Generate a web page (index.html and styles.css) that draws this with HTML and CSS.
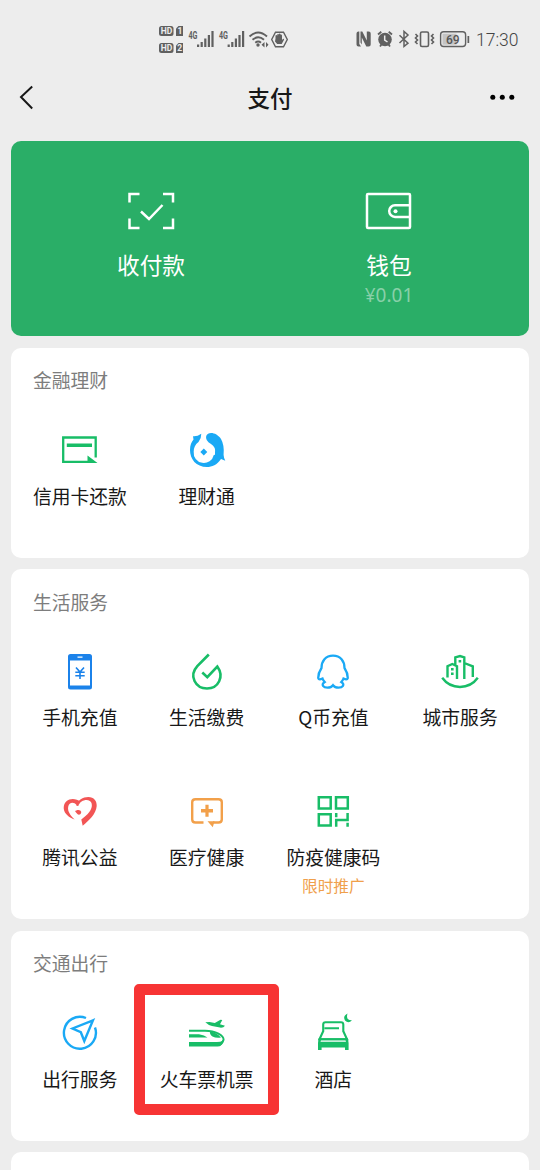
FILE: index.html
```html
<!DOCTYPE html>
<html lang="zh-CN">
<head>
<meta charset="utf-8">
<title>支付</title>
<link rel="stylesheet" href="styles.css">
</head>
<body>
<div class="status">
  <svg class="status-left" width="132" height="32" viewBox="158 24 132 32">
    <g class="solid">
      <rect x="159" y="26" width="14.5" height="10" rx="2.5"/><path d="M178.500 26H183V36H176V28.500Z"/>
      <rect x="159" y="43" width="14.500" height="10" rx="2.500"/><path d="M178.500 43H183V53H176V45.500Z"/>
      <rect x="197" y="44.500" width="2.200" height="2.500"/><rect x="200.600" y="42" width="2.200" height="5"/><rect x="204.200" y="38.500" width="2.200" height="8.500"/><rect x="207.800" y="35" width="2.200" height="12"/><rect x="211.400" y="31" width="2.200" height="16"/>
      <rect x="227.600" y="44.500" width="2.200" height="2.500"/><rect x="231.200" y="42" width="2.200" height="5"/><rect x="234.800" y="38.500" width="2.200" height="8.500"/><rect x="238.400" y="35" width="2.200" height="12"/><rect x="242" y="31" width="2.200" height="16"/>
      <circle cx="258" cy="45" r="1.700"/><path d="M264.500 42V47.500L261.500 44.800ZM266 42V47.500L268.500 44.800Z"/>
      <path d="M275.500 38.500V35.500Q276.700 34.500 277.200 36V34.500Q278.300 33.500 278.800 34.700V34Q280 33 280.500 34.500Q281.700 34 282 35.500V40L283.200 38.800Q284.500 38.800 283.900 40L281.700 44H277.200L275 41.500Z"/>
    </g>
    <g class="line"><path d="M249.500 36.500Q258 28.500 267 36.500M252.500 39.800Q258.200 34.800 264 39.800M255.300 42.700Q258.200 40.300 261 42.700" stroke-width="1.900"/><path d="M275.500 32.200H283.500L287.300 39.500L283.500 46.800H275.500L271.700 39.500Z" stroke-width="1.400"/></g>
    <g class="badge-text"><text x="160.700" y="34.100">HD</text><text x="177.400" y="34.200">1</text><text x="160.700" y="51.100">HD</text><text x="177.200" y="51.200">2</text></g>
    <g class="network-text"><text x="188.500" y="39" textLength="9" lengthAdjust="spacingAndGlyphs">4G</text><text x="219" y="39" textLength="9" lengthAdjust="spacingAndGlyphs">4G</text></g>
  </svg>
  <svg class="status-right" width="116" height="24" viewBox="354 27 116 24">
    <path class="solid" d="M358.500 31.500H359.300V44L361 46.500H358.500Q356.500 46.500 356.500 44.500V33.500Q356.500 31.500 358.500 31.500ZM360.500 31.500H362.300L366.800 40.500V31.500H368.700Q370.700 31.500 370.700 33.500V44.500Q370.700 46.500 368.700 46.500H366.300L361.800 37.500V44.500L360.500 42.500Z"/>
    <circle class="solid" cx="385" cy="39.500" r="6.800"/>
    <g class="line"><path d="M378 34.500L381.300 31.700M388.700 31.700L392 34.500M380 46.500L381.500 44.500M388.500 44.500L390 46.500" stroke-width="1.800"/><path class="light-line" d="M384.700 35.500V40L387.500 42"/><path d="M399.500 35.200L408 43.200L404 46.500V31.500L408 35L399.500 43" stroke-width="1.500"/><rect x="420.500" y="32" width="8" height="14.500" rx="1.500" stroke-width="1.600"/><path d="M415.500 34L417.500 36L415.500 38L417.500 40L415.500 42L417.500 44M433.500 34L431.500 36L433.500 38L431.500 40L433.500 42L431.500 44" stroke-width="1.600"/><rect x="440.600" y="31.800" width="25" height="14.700" rx="3" stroke-width="1.400"/></g>
    <rect class="charge" x="442.500" y="33.700" width="14" height="11"/><rect class="solid" x="467.500" y="36" width="1.700" height="7"/>
    <text class="battery-text" x="446" y="43.600">69</text>
  </svg>
  <span class="clock">17:30</span>
</div>

<header class="nav">
  <svg width="28" height="32" viewBox="0 0 28 32"><path class="nav-line" d="M20.200 5.500L9 16L20.200 27.500"/></svg>
  <h1>支付</h1>
  <svg width="28" height="32" viewBox="0 0 28 32"><circle cx="2.800" cy="16.300" r="2.500"/><circle cx="12.300" cy="16.300" r="2.500"/><circle cx="21.800" cy="16.300" r="2.500"/></svg>
</header>

<main class="cards">
  <section class="wallet">
    <div class="wallet-item">
      <svg width="48" height="40" viewBox="0 0 48 40"><path d="M2.500 12.500V4H12.500M36 4H46V12.500M46 28.500V38H36M12.500 38H2.500V28.500M14 21.500L22 29L35.500 15"/></svg>
      <span class="wallet-label">收付款</span>
    </div>
    <div class="wallet-item">
      <svg width="48" height="40" viewBox="0 0 48 40"><rect x="2" y="4" width="43" height="34" rx="1"/><path d="M44.500 15.300H30A5.800 5.800 0 0 0 30 26.900H44.500"/><circle class="wallet-dot" cx="30.500" cy="21.200" r="2"/></svg>
      <span class="wallet-label">钱包</span>
      <span class="balance">¥0.01</span>
    </div>
  </section>

  <section class="card">
    <h2>金融理财</h2>
    <div class="grid">
      <div class="item"><svg class="icon green" viewBox="0 0 48 48"><path d="M39.700 31.500V11.500H7.200V35.800H33"/><path class="fill" d="M10.800 17.500H36V21H10.800ZM31.500 29.500L41.500 37H31.500Z"/></svg><span>信用卡还款</span></div>
      <div class="item"><svg class="icon sky" viewBox="0 0 48 48"><path class="fill" d="M10 10.300Q14 10.800 18.300 7.800Q18.500 12 15.500 16C12 18.500 10.700 22 10.700 25.700A10.200 10.200 0 0 0 30.800 29Q32.500 29.500 32 27Q33 21 28 18Q22 14.500 23.200 10C25 5 34 6.500 38 13Q41.500 19 40.600 29Q40.800 32 42.300 34.800L38 33C34 39 29 41 24 41C13 41 7 33 7 24C7 19 8.500 16 10.500 13.500Z"/><path class="fill" d="M20.800 22.500L22.500 24.300L24.300 26L22.500 27.700L20.800 29.500L19.100 27.700L17.300 26L19.100 24.300Z"/></svg><span>理财通</span></div>
    </div>
  </section>

  <section class="card">
    <h2>生活服务</h2>
    <div class="grid">
      <div class="item"><svg class="icon blue" viewBox="0 0 48 48"><path class="fill" fill-rule="evenodd" d="M14.500 6H33.500Q36 6 36 8.500V39Q36 41.500 33.500 41.500H14.500Q12 41.500 12 39V8.500Q12 6 14.500 6ZM14 12.500V37.500H34V12.500ZM21.500 8.500V9.700H26.500V8.500Z"/><path d="M20 19.500L24 24L28 19.500M24 24V31M19.300 24.300H28.700M19.300 27.700H28.700" stroke-width="1.600"/></svg><span>手机充值</span></div>
      <div class="item"><svg class="icon green" viewBox="0 0 48 48"><path d="M25.800 6.500L14.300 18.200C5.500 28 12.500 40.500 24 40.500C35.500 40.500 41.500 28.500 34.300 18.500L24.300 29.200L19.300 24.500" stroke-width="2.600"/></svg><span>生活缴费</span></div>
      <div class="item"><svg class="icon sky" viewBox="0 0 48 48"><path d="M24 7.600C16.500 7.600 12.500 13 12.500 20C10.500 23 9.200 26.500 9.200 30C9.700 32 11.500 31.500 13.500 30.500C14 32 14.700 33 15.700 34C11.500 36.700 14.500 39.600 18.500 39.600C21 39.600 23 38.500 24 37.200C25 38.500 27 39.600 29.500 39.600C33.500 39.600 36.500 36.700 32.300 34C33.300 33 34 32 34.500 30.500C36.500 31.500 38.300 32 38.800 30C38.800 26.500 37.500 23 35.500 20C35.500 13 31.500 7.600 24 7.600Z" stroke-width="2.300"/></svg><span>Q币充值</span></div>
      <div class="item"><svg class="icon green" viewBox="0 0 48 48"><path d="M6.200 29.800C15 42 33 42 41.800 29.800M11.500 29.500V18.200L16.300 16L21 18.200V31M19.300 16.500V9.300L24 8L28.300 9.300V31M28.300 15L36.800 18.400V29" stroke-width="2.400"/><path class="fill" d="M22.600 12H25.200V14.600H22.600ZM15 20H17.600V22.600H15ZM15 24.500H17.600V27.100H15Z"/></svg><span>城市服务</span></div>
      <div class="item"><svg class="icon red" viewBox="0 0 48 48"><path class="fill" d="M24.300 13.800C19 9 7.700 10 7.700 20.200C8 26 13.500 29.500 18.600 31.500C14.500 27.500 11.300 23.500 12.200 18.800C13 14 18 13.500 20.500 17Z"/><path class="fill" d="M20.300 17.800C21.500 12 27 9 32.300 9C38 9 41 13 40.700 18C40 26.500 33 32 26.700 37.800L25.300 31.500C31 27.500 37 21.500 35.700 15.800C34.500 10 24.500 11 22.300 18Z"/><path class="fill" d="M19 23L21.500 22Q24.500 21.500 25.300 24Q25 27.300 22 26.500Q20.500 25.500 19 23Z"/></svg><span>腾讯公益</span></div>
      <div class="item"><svg class="icon orange" viewBox="0 0 48 48"><path d="M20.500 34.500H12.500Q9.200 34.500 9.200 31.500V14.200Q9.200 11.200 12.500 11.200H35.500Q38.800 11.200 38.800 14.200V31.500Q38.800 34.500 35.500 34.500H30" stroke-width="2.400"/><path class="fill" d="M22.400 16.800H25.600V21.100H30V24.400H25.600V28.800H22.400V24.400H18V21.100H22.400ZM24.500 33.300H31.500L29.800 39.200Z"/></svg><span>医疗健康</span></div>
      <div class="item"><svg class="icon green" viewBox="0 0 48 48"><path d="M9.800 9.300H21.700V20.400H9.800ZM27 9.300H38.800V20.400H27ZM9.800 26.300H21.700V37.500H9.800ZM27.200 25V29.200M38.600 25V32H27.200V38.700M38.600 34.800V38.700" stroke-width="2.500"/></svg><span>防疫健康码</span><small>限时推广</small></div>
    </div>
  </section>

  <section class="card">
    <h2>交通出行</h2>
    <div class="grid">
      <div class="item"><svg class="icon sky" viewBox="0 0 48 48"><path d="M30 9A16 16 0 1 0 39 18.500M37 11.300L16.500 19.500L24.800 23.200L28.300 32Z" stroke-width="2.400"/></svg><span>出行服务</span></div>
      <div class="item"><svg class="icon green" viewBox="0 0 48 48"><path d="M6 21.700H22C33 21.700 40.600 26.500 40.600 30.500Q40 34 36.500 36" stroke-width="1.900"/><path class="fill" d="M6 33H34Q37.500 33 40 31.500Q39.500 37.500 34.500 37.500H6ZM6 25.200H16Q21.500 26 24.500 28.500H6ZM27 22.500Q33 23 38 28.500Q33 29.300 29.500 27.500Q26.500 25.500 27 22.500ZM22.300 13.300L26.500 13L31.800 14L37.500 10.800L39.300 11L37 15.200L42 16.700Q40.500 19 37 18.600L29 17Q25 16 22.300 13.300Z"/></svg><span>火车票机票</span><i class="highlight"></i></div>
      <div class="item"><svg class="icon green" viewBox="0 0 48 48"><path d="M14.200 22V15.500Q14.200 13.200 16.500 13.200H32Q34.300 13.200 34.300 15.500V22M15.500 19.200H30M14.500 21.500L10.500 30.200H38L34 21.500" stroke-width="2.100"/><path class="fill" d="M9.600 29.300H38.900L39.600 34V41H36V38.500H12.600V41H9V34ZM12 31.200L11.500 32.800H37L36.500 31.200Z" fill-rule="evenodd"/><path class="fill" d="M38.500 4.500Q33.500 7 36 11.500Q39.500 15 43 11.200Q36.500 11.500 38.500 4.500Z"/></svg><span>酒店</span></div>
    </div>
  </section>
  <section class="card next-card"></section>
</main>
</body>
</html>
```
FILE: styles.css
```css
* { box-sizing: border-box; }
body {
  margin: 0;
  width: 540px;
  height: 1170px;
  overflow: hidden;
  background: #ededed;
  color: #181818;
  font-family: "Noto Sans CJK SC", sans-serif;
}
svg { display: block; flex: none; }
h1, h2 { margin: 0; }

.status {
  height: 76px;
  padding: 24px 0 0 158px;
  display: flex;
  align-items: flex-start;
}
.status-right { margin: 3px 0 0 64px; }
.clock {
  margin-left: 6px;
  font: 300 17.5px/32px Roboto, sans-serif;
  color: #444;
}
.solid { fill: #606060; }
.line { fill: none; stroke: #606060; }
.line .light-line { stroke: #ededed; stroke-width: 1.5; }
.charge { fill: #c4c4c4; }
.badge-text { font: 700 8.5px Roboto, sans-serif; fill: #ededed; }
.network-text { font: 700 10px Roboto, sans-serif; fill: #606060; }
.battery-text { font: 500 12px Roboto, sans-serif; fill: #555; }

.nav {
  height: 64.5px;
  padding: 5px 22px 0 12px;
  display: flex;
  justify-content: space-between;
  align-items: flex-start;
}
.nav h1 {
  margin-left: 10px;
  font-size: 22.5px;
  font-weight: 500;
  line-height: 32px;
}
.nav-line { fill: none; stroke: #181818; stroke-width: 2; }

.cards {
  padding: 0 11px;
  display: flex;
  flex-direction: column;
  gap: 11.5px;
}
.wallet {
  height: 195.7px;
  padding: 49px 21px 0;
  border-radius: 10px;
  background: #2aae67;
  color: #fff;
  display: grid;
  grid-template-columns: 1fr 1fr;
}
.wallet-item { display: flex; flex-direction: column; align-items: center; }
.wallet-item svg { fill: none; stroke: #fff; stroke-width: 2.5; }
.wallet-item .wallet-dot { fill: #fff; stroke: none; }
.wallet-label { margin-top: 18.5px; font-size: 22.7px; line-height: 34px; }
.balance {
  margin-top: 1px;
  font-family: "Noto Sans", sans-serif;
  font-size: 19px;
  line-height: 24px;
  color: #89d0a9;
}

.card {
  padding: 19.8px 5.5px 0;
  border-radius: 10px;
  background: #fff;
}
.card h2 {
  padding-left: 16.5px;
  font-size: 18.8px;
  font-weight: 400;
  line-height: 26px;
  color: #7d7d7d;
}
.grid {
  margin-top: 33px;
  display: grid;
  grid-template-columns: repeat(4, 1fr);
  grid-auto-rows: 131.2px;
  row-gap: 8.8px;
}
.item {
  position: relative;
  display: flex;
  flex-direction: column;
  align-items: center;
}
.item span {
  margin-top: 7.5px;
  font-size: 18.8px;
  line-height: 28px;
  white-space: nowrap;
}
.item small {
  margin-top: 3px;
  font-size: 15.7px;
  line-height: 24px;
  color: #f0a04b;
}
.icon {
  width: 48px;
  height: 48px;
  fill: none;
  stroke: currentColor;
  stroke-width: 2.3;
}
.icon .fill { fill: currentColor; stroke: none; }
.green { color: #18bd67; }
.sky { color: #1aa9f5; }
.blue { color: #1b82ea; }
.red { color: #f25555; }
.orange { color: #f2a04a; }

.highlight {
  position: absolute;
  top: -25.5px;
  left: -9px;
  width: 145px;
  height: 131px;
  border: 11px solid #f73434;
  border-radius: 5px;
}
.next-card { height: 60px; }
```
